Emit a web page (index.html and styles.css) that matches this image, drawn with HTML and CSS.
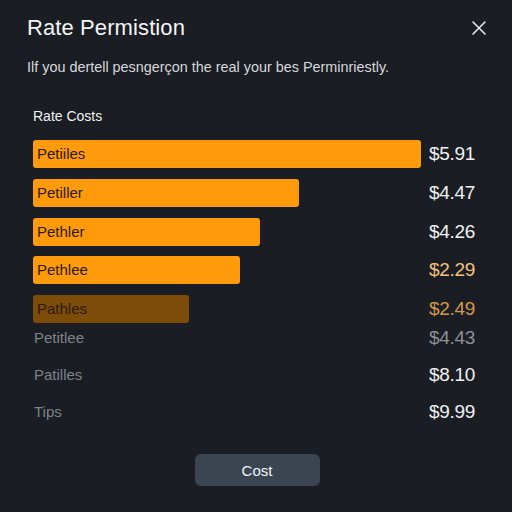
FILE: index.html
```html
<!DOCTYPE html>
<html>
<head>
<meta charset="utf-8">
<link rel="stylesheet" href="styles.css">
</head>
<body>
<div class="dialog">
  <div class="header">
    <h1 class="title">Rate Permistion</h1>
    <button class="close" aria-label="Close">
      <svg width="16" height="16" viewBox="0 0 16 16"><path d="M2 2L14 14M14 2L2 14" stroke="#e6e8ec" stroke-width="1.6" stroke-linecap="round"/></svg>
    </button>
  </div>
  <p class="subtitle">Ilf you dertell pesngerçon the real your bes Perminriestly.</p>
  <h2 class="section">Rate Costs</h2>
  <div class="bars">
    <div class="row"><div class="track"><div class="bar" style="width:388px">Petiiles</div></div><span class="price">$5.91</span></div>
    <div class="row"><div class="track"><div class="bar" style="width:266px">Petiller</div></div><span class="price">$4.47</span></div>
    <div class="row"><div class="track"><div class="bar" style="width:227px">Pethler</div></div><span class="price">$4.26</span></div>
    <div class="row"><div class="track"><div class="bar" style="width:207px">Pethlee</div></div><span class="price amber">$2.29</span></div>
    <div class="row"><div class="track"><div class="bar dim" style="width:156px">Pathles</div></div><span class="price amber-dim">$2.49</span></div>
  </div>
  <div class="plain">
    <div class="prow"><span class="plabel">Petitlee</span><span class="price gray">$4.43</span></div>
    <div class="prow"><span class="plabel">Patilles</span><span class="price">$8.10</span></div>
    <div class="prow"><span class="plabel">Tips</span><span class="price">$9.99</span></div>
  </div>
  <div class="footer">
    <button class="btn">Cost</button>
  </div>
</div>
</body>
</html>
```
FILE: styles.css
```css
* { box-sizing: border-box; }
html, body { margin: 0; padding: 0; }
body {
  width: 512px;
  height: 512px;
  background: #1a1d23;
  font-family: "Liberation Sans", Arial, sans-serif;
  color: #eceef1;
  overflow: hidden;
}
.dialog {
  width: 512px;
  height: 512px;
  padding: 14px 24px 0 27px;
  display: flex;
  flex-direction: column;
}
.header {
  display: flex;
  justify-content: space-between;
  align-items: center;
  height: 28px;
}
.title {
  margin: 0;
  font-size: 22px;
  font-weight: 400;
  color: #f4f5f7;
  letter-spacing: 0.1px;
}
.close {
  background: none;
  border: 0;
  padding: 0;
  width: 16px;
  height: 16px;
  margin-right: 1px;
  display: flex;
}
.subtitle {
  margin: 17px 0 0 0;
  font-size: 14.4px;
  color: #d6d8dc;
  line-height: 16px;
}
.section {
  margin: 33px 0 0 6px;
  font-size: 14px;
  font-weight: 400;
  color: #f0f1f3;
  line-height: 16px;
}
.bars {
  margin: 16px 0 0 6px;
  display: flex;
  flex-direction: column;
  gap: 10.75px;
  width: 442px;
}
.row {
  display: flex;
  justify-content: space-between;
  align-items: center;
  height: 28px;
}
.track { width: 388px; height: 28px; }
.bar {
  height: 28px;
  background: #ff9a0a;
  border-radius: 3px;
  color: #2a1a02;
  font-size: 15px;
  line-height: 28px;
  padding-left: 4px;
}
.bar.dim { background: #7d4c09; color: #2c1b05; }
.price {
  font-size: 19px;
  color: #eff0f2;
  letter-spacing: -0.3px;
}
.price.amber { color: #f4c27c; }
.price.amber-dim { color: #d29a48; }
.price.gray { color: #8b9099; }
.plain {
  margin: -4px 0 0 6px;
  width: 442px;
  display: flex;
  flex-direction: column;
}
.prow {
  display: flex;
  justify-content: space-between;
  align-items: center;
  height: 37px;
}
.plabel {
  font-size: 15px;
  color: #7e838c;
  padding-left: 1px;
}
.footer {
  display: flex;
  justify-content: center;
  margin-top: 24px;
  padding-right: 1px;
}
.btn {
  width: 125px;
  height: 32px;
  background: #3b4552;
  border: 0;
  border-radius: 6px;
  color: #f2f3f5;
  font-family: "Liberation Sans", Arial, sans-serif;
  font-size: 15px;
}
```
